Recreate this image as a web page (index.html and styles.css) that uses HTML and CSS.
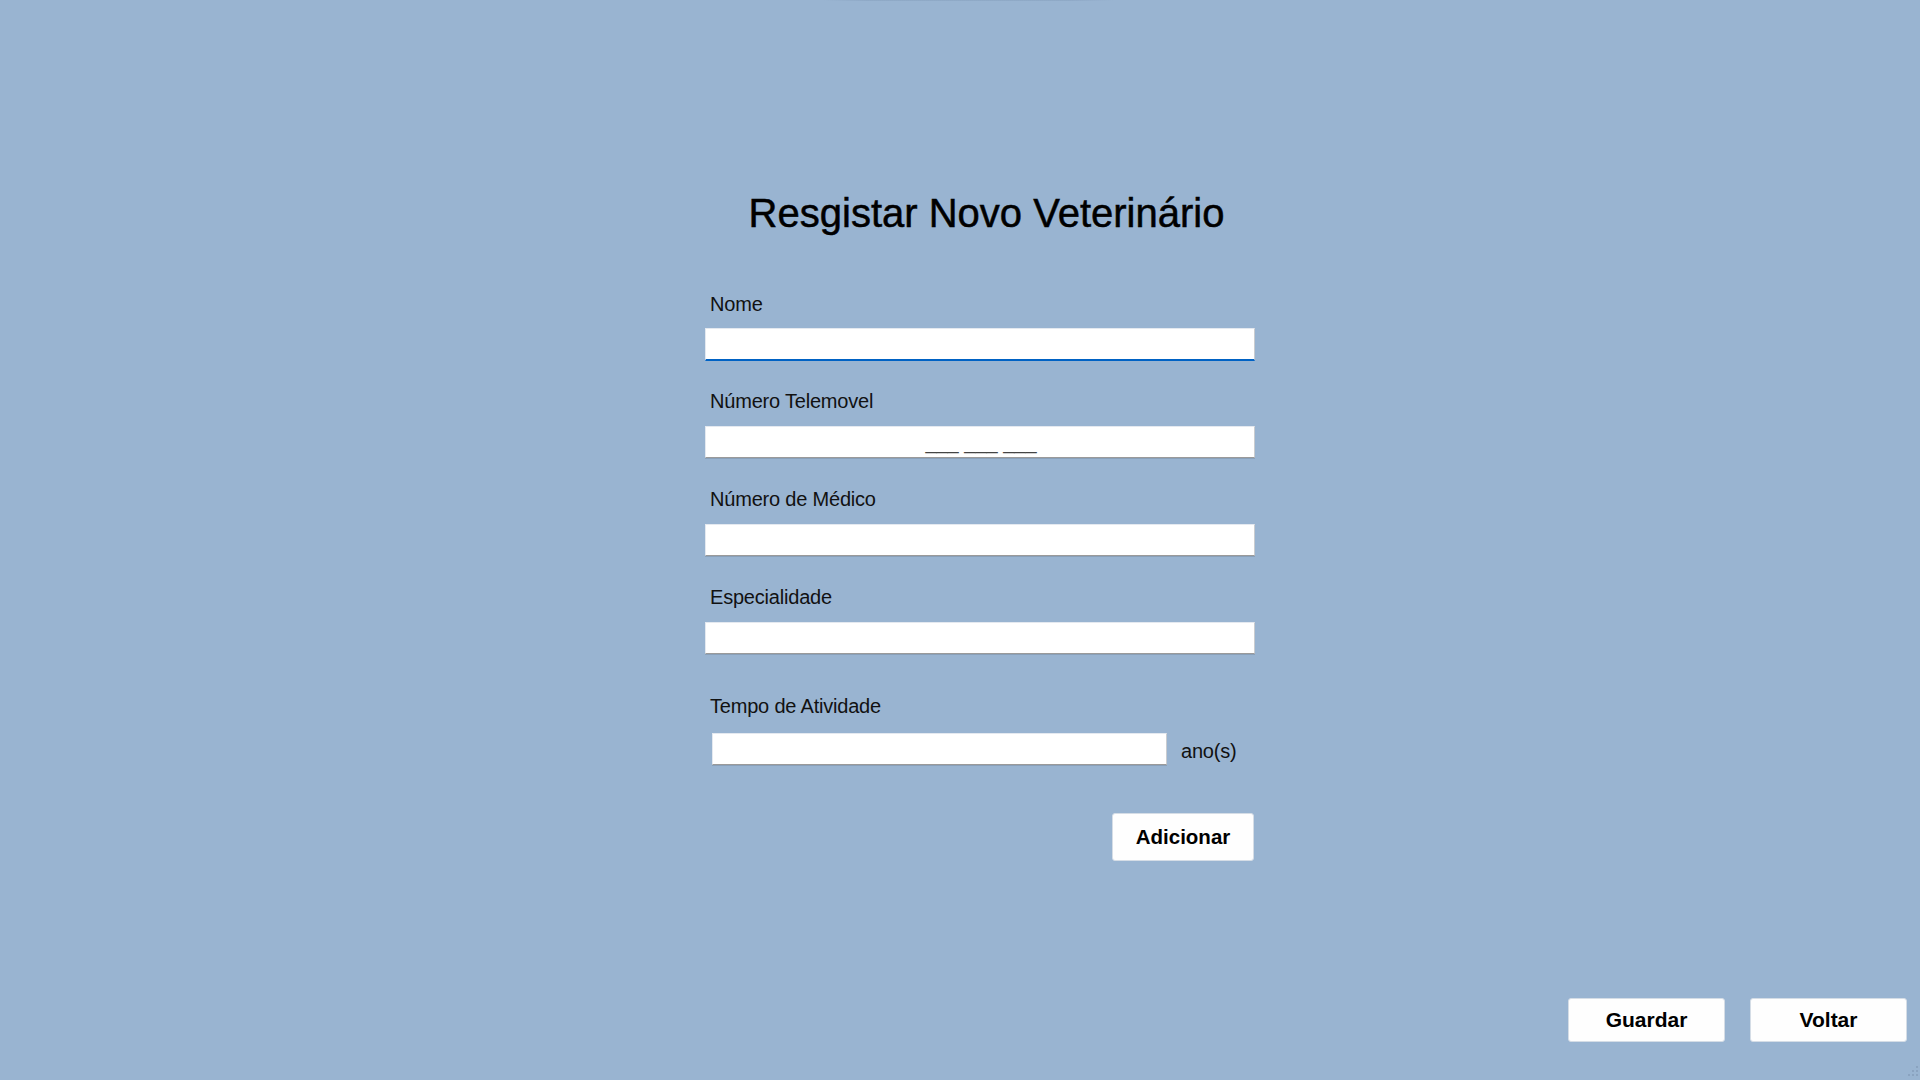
FILE: index.html
```html
<!DOCTYPE html>
<html lang="pt">
<head>
<meta charset="utf-8">
<title>Resgistar Novo Veterinário</title>
<link rel="stylesheet" href="styles.css">
</head>
<body>
<div class="window">
  <div class="top-glint"></div>
  <main class="form">
    <h1 class="title">Resgistar Novo Veterinário</h1>

    <div class="field field-first">
      <label class="label">Nome</label>
      <div class="input input-focus"></div>
    </div>

    <div class="field field-second">
      <label class="label">Número Telemovel</label>
      <div class="input input-mask"><span class="mask">___ ___ ___</span></div>
    </div>

    <div class="field">
      <label class="label">Número de Médico</label>
      <div class="input"></div>
    </div>

    <div class="field">
      <label class="label">Especialidade</label>
      <div class="input"></div>
    </div>

    <div class="field field-time">
      <label class="label">Tempo de Atividade</label>
      <div class="time-row">
        <div class="input input-time"></div>
        <span class="unit">ano(s)</span>
      </div>
    </div>

    <div class="add-row">
      <button class="btn btn-add">Adicionar</button>
    </div>
  </main>

  <div class="footer">
    <button class="btn btn-foot">Guardar</button>
    <button class="btn btn-foot">Voltar</button>
  </div>

  <svg class="grip" width="12" height="12" viewBox="0 0 12 12">
    <rect x="8" y="0" width="2" height="2" fill="#8aa3c0"/>
    <rect x="4" y="4" width="2" height="2" fill="#8aa3c0"/>
    <rect x="8" y="4" width="2" height="2" fill="#8aa3c0"/>
    <rect x="0" y="8" width="2" height="2" fill="#8aa3c0"/>
    <rect x="4" y="8" width="2" height="2" fill="#8aa3c0"/>
    <rect x="8" y="8" width="2" height="2" fill="#8aa3c0"/>
  </svg>
</div>
</body>
</html>
```

FILE: styles.css
```css
html, body {
  margin: 0;
  padding: 0;
}

body {
  background: #99b4d1;
  font-family: "Liberation Sans", Arial, sans-serif;
  color: #000;
}

.window {
  position: relative;
  width: 1920px;
  height: 1080px;
  display: flex;
  flex-direction: column;
  justify-content: space-between;
  overflow: hidden;
}

.top-glint {
  position: absolute;
  top: 0;
  left: 823px;
  width: 290px;
  height: 1px;
  background: linear-gradient(90deg, rgba(130,156,186,0), rgba(130,156,186,0.45) 15%, rgba(130,156,186,0.45) 85%, rgba(130,156,186,0));
}

.form {
  width: 550px;
  margin-left: 705px;
  padding-top: 190px;
  display: flex;
  flex-direction: column;
}

.title {
  margin: 0;
  padding-left: 13px;
  font-size: 40px;
  line-height: 46px;
  font-weight: normal;
  text-align: center;
  white-space: nowrap;
  -webkit-text-stroke: 0.5px #000;
}

.field {
  display: flex;
  flex-direction: column;
  gap: 14px;
  margin-top: 30px;
}

.field-first {
  margin-top: 57px;
  gap: 13px;
}

.field-second {
  margin-top: 29px;
}

.field-time {
  margin-top: 41px;
  gap: 16px;
}

.label {
  display: block;
  padding-left: 5px;
  font-size: 20px;
  line-height: 22px;
  color: #111;
  letter-spacing: -0.2px;
}

.input {
  box-sizing: border-box;
  height: 32px;
  background: #fff;
  border-top: 1px solid #e4e9f0;
  border-left: 1px solid #e4e9f0;
  border-right: 1px solid #c9ccd0;
  border-bottom: 1px solid #9a9a9a;
  box-shadow: 0 1px 0 rgba(90, 100, 115, 0.25);
}

.input-focus {
  height: 33px;
  border-bottom: 2px solid #0062c4;
  box-shadow: none;
}

.input-mask {
  display: flex;
  justify-content: center;
  align-items: flex-end;
}

.mask {
  font-size: 20px;
  line-height: 22px;
  color: #444;
  padding-left: 2px;
  margin-bottom: 4px;
}

.time-row {
  display: flex;
  align-items: center;
  gap: 14px;
  padding-left: 7px;
}

.input-time {
  width: 455px;
  height: 32px;
}

.unit {
  font-size: 20px;
  line-height: 22px;
  color: #111;
  letter-spacing: -0.2px;
  padding-top: 3px;
}

.add-row {
  display: flex;
  justify-content: flex-end;
  margin-top: 48px;
  padding-right: 1px;
}

.btn {
  box-sizing: border-box;
  background: #fefefe;
  border: 1px solid #d5dde6;
  border-radius: 3px;
  font-family: "Liberation Sans", Arial, sans-serif;
  font-weight: bold;
  color: #000;
  padding: 0;
  cursor: default;
}

.btn-add {
  width: 142px;
  height: 48px;
  font-size: 20.5px;
}

.footer {
  display: flex;
  justify-content: flex-end;
  gap: 25px;
  padding: 0 13px 38px 0;
}

.btn-foot {
  width: 157px;
  height: 44px;
  font-size: 21px;
}

.grip {
  position: absolute;
  right: 0;
  bottom: 2px;
}
```
